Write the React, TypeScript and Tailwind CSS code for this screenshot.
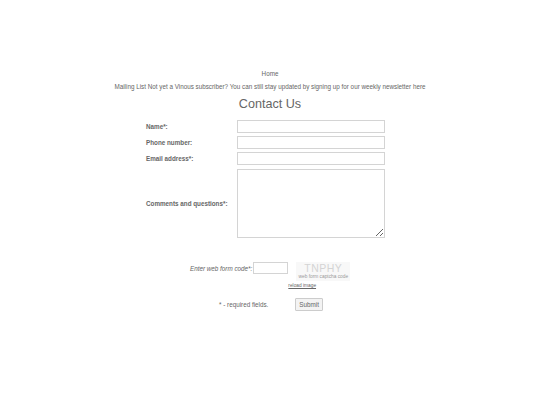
import React from 'react';

const font = { fontFamily: '"Liberation Sans", Arial, sans-serif' };

const Field = ({ label, tall }: { label: string; tall?: boolean }) => (
  <div className="flex items-center">
    <label className="w-[91px] text-[6.3px] font-bold text-[#666]">{label}</label>
    {tall ? (
      <textarea className="h-[69px] w-[148px] resize-y border border-[#d4d4d4] bg-white" />
    ) : (
      <input className="h-[13px] w-[148px] border border-[#d4d4d4] bg-white" />
    )}
  </div>
);

export default function App() {
  return (
    <div className="min-h-[405px] w-[540px] bg-white text-[#666]" style={font}>
      <div className="flex flex-col items-center pt-[70px]">
        <a className="text-[6.3px] leading-[8px] text-[#666]">Home</a>
        <p className="mt-[5px] text-[6.3px] leading-[8px] text-[#666]">
          Mailing List Not yet a Vinous subscriber? You can still stay updated by signing up for our weekly newsletter here
        </p>
        <h1 className="mt-[5px] text-[12.6px] leading-[16px] text-[#666]">Contact Us</h1>
      </div>

      <div className="ml-[146px] mt-[8px] flex flex-col gap-[3px]">
        <Field label="Name*:" />
        <Field label="Phone number:" />
        <Field label="Email address*:" />
        <div className="mt-[1px]">
          <Field label="Comments and questions*:" tall />
        </div>
      </div>

      <div className="ml-[190px] mt-[24px] flex items-start">
        <span className="mt-[2px] text-[6.3px] italic text-[#666]">Enter web form code*:</span>
        <input className="ml-[1px] h-[12px] w-[35px] border border-[#d4d4d4] bg-white" />
        <div className="ml-[8px] flex flex-col">
          <div className="flex h-[19px] w-[54px] flex-col items-center bg-[#f8f8f8]">
            <span className="text-[10.5px] leading-[12px] tracking-[0.5px] text-[#d4d4d4]">TNPHY</span>
            <span className="text-[4.8px] leading-[6px] text-[#999]">web form captcha code</span>
          </div>
          <a className="-ml-[8px] mt-[1px] text-[4.8px] text-[#666] underline">reload image</a>
        </div>
      </div>

      <div className="ml-[219px] mt-[9px] flex items-center">
        <span className="text-[6.3px] text-[#666]">* - required fields.</span>
        <button className="ml-[27px] h-[13px] rounded-[1px] border border-[#ccc] bg-[#f3f3f3] px-[3px] text-[6.3px] text-[#666]">
          Submit
        </button>
      </div>
    </div>
  );
}
